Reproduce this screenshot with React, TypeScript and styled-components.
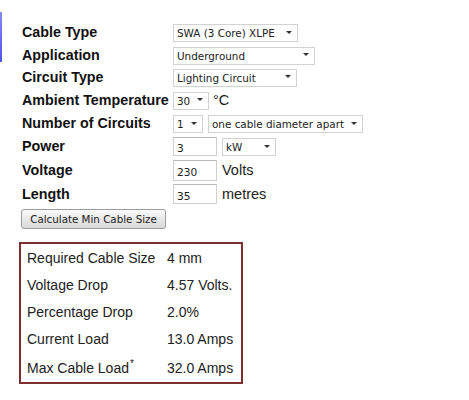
import React from 'react';
import styled, {createGlobalStyle} from 'styled-components';

const GlobalStyle = createGlobalStyle`
    body {
        margin: 0;
        background: #fff;
        font-family: "Liberation Sans", Arial, sans-serif;
    }
`

const Page = styled.div`
    position: relative;
    padding: 21px 0 0 22px;
    min-height: 379px;
`

const EdgeStrip = styled.div`
    position: absolute;
    left: 0;
    top: 12px;
    width: 2px;
    height: 50px;
    background: linear-gradient(#8a8af0, #5252e6);
`

const Form = styled.div`
    display: flex;
    flex-direction: column;
`

const Row = styled.div<{$h: number}>`
    display: flex;
    align-items: center;
    height: ${p => p.$h}px;
`

const Label = styled.div`
    width: 151px;
    flex-shrink: 0;
    font-weight: bold;
    font-size: 14.3px;
    color: #111;
    white-space: nowrap;
`

const Controls = styled.div`
    display: flex;
    align-items: center;
    gap: 5px;
`

const SelectWrap = styled.div<{$w: number}>`
    position: relative;
    width: ${p => p.$w}px;
    height: 18px;
`

const Select = styled.select`
    appearance: none;
    -webkit-appearance: none;
    width: 100%;
    height: 100%;
    box-sizing: border-box;
    margin: 0;
    padding: 0 0 0 3px;
    border: 1px solid #d2d2d2;
    border-radius: 0;
    background: #fff;
    font-family: "DejaVu Sans", Tahoma, sans-serif;
    font-size: 10.4px;
    color: #222;
    outline: none;
`

const Arrow = styled.span`
    position: absolute;
    right: 6px;
    top: 7.5px;
    width: 0;
    height: 0;
    border-left: 3.5px solid transparent;
    border-right: 3.5px solid transparent;
    border-top: 3.5px solid #333;
    pointer-events: none;
`

const TextInput = styled.input<{$h: number}>`
    width: 44px;
    height: ${p => p.$h}px;
    box-sizing: border-box;
    margin: 0;
    padding: 3px 0 0 3px;
    border: 1px solid #cfcfcf;
    border-top-color: #b8b8b8;
    font-family: "DejaVu Sans", Tahoma, sans-serif;
    font-size: 10.6px;
    color: #222;
    outline: none;
`

const Unit = styled.span`
    font-size: 14.5px;
    color: #222;
`

const Button = styled.button`
    align-self: flex-start;
    margin: 3px 0 0 -1px;
    width: 145px;
    height: 20px;
    padding: 0;
    border: 1px solid #9a9a9a;
    border-radius: 3px;
    background: linear-gradient(#fafafa, #e9e9e9 50%, #d9d9d9);
    font-family: "DejaVu Sans", Tahoma, sans-serif;
    font-size: 10.3px;
    color: #222;
`

const ResultBox = styled.div`
    margin: 13px 0 0 -3px;
    width: 224px;
    box-sizing: border-box;
    border: 2px solid #7d2f2f;
    display: grid;
    grid-template-columns: 140px auto;
    padding-left: 6px;
`

const Cell = styled.div<{$h: number}>`
    height: ${p => p.$h}px;
    display: flex;
    align-items: center;
    font-size: 14px;
    color: #222;
    white-space: nowrap;
`

const Star = styled.span`
    font-size: 10px;
    align-self: flex-start;
    margin: 5px 0 0 1px;
`

const SelectField = ({w, value, options}: {w: number, value: string, options: string[]}) => (
    <SelectWrap $w={w}>
        <Select defaultValue={value}>
            {options.map(o => <option key={o}>{o}</option>)}
        </Select>
        <Arrow />
    </SelectWrap>
);

const results: [string, React.ReactNode, number][] = [
    ['Required Cable Size', '4 mm', 27],
    ['Voltage Drop', '4.57 Volts.', 27],
    ['Percentage Drop', '2.0%', 27],
    ['Current Load', '13.0 Amps', 28],
    ['Max Cable Load', '32.0 Amps', 29],
];

export default function App() {
    return (
        <Page>
            <GlobalStyle />
            <EdgeStrip />
            <Form>
                <Row $h={22}>
                    <Label>Cable Type</Label>
                    <SelectField w={125} value="SWA (3 Core) XLPE" options={['SWA (3 Core) XLPE', 'SWA (2 Core) XLPE', 'SWA (4 Core) XLPE']} />
                </Row>
                <Row $h={23}>
                    <Label>Application</Label>
                    <SelectField w={142} value="Underground" options={['Underground', 'Clipped Direct', 'In Conduit']} />
                </Row>
                <Row $h={21}>
                    <Label>Circuit Type</Label>
                    <SelectField w={124} value="Lighting Circuit" options={['Lighting Circuit', 'Power Circuit', 'Motor Circuit']} />
                </Row>
                <Row $h={25}>
                    <Label>Ambient Temperature</Label>
                    <Controls>
                        <SelectField w={36} value="30" options={['25', '30', '35', '40']} />
                        <Unit style={{marginLeft: -1}}>°C</Unit>
                    </Controls>
                </Row>
                <Row $h={22}>
                    <Label>Number of Circuits</Label>
                    <Controls>
                        <SelectField w={30} value="1" options={['1', '2', '3', '4']} />
                        <SelectField w={155} value="one cable diameter apart" options={['touching', 'one cable diameter apart']} />
                    </Controls>
                </Row>
                <Row $h={24}>
                    <Label>Power</Label>
                    <Controls>
                        <TextInput $h={19} defaultValue="3" />
                        <SelectField w={54} value="kW" options={['W', 'kW']} />
                    </Controls>
                </Row>
                <Row $h={24}>
                    <Label>Voltage</Label>
                    <Controls>
                        <TextInput $h={21} defaultValue="230" />
                        <Unit>Volts</Unit>
                    </Controls>
                </Row>
                <Row $h={24}>
                    <Label>Length</Label>
                    <Controls>
                        <TextInput $h={20} defaultValue="35" />
                        <Unit>metres</Unit>
                    </Controls>
                </Row>
                <Button>Calculate Min Cable Size</Button>
                <ResultBox>
                    {results.map(([label, value, h], i) => (
                        <React.Fragment key={label}>
                            <Cell $h={h}>{label}{i === 4 && <Star>*</Star>}</Cell>
                            <Cell $h={h}>{value}</Cell>
                        </React.Fragment>
                    ))}
                </ResultBox>
            </Form>
        </Page>
    );
}
